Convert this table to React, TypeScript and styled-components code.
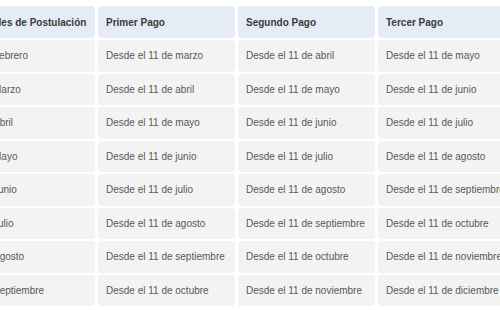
import styled, { createGlobalStyle } from "styled-components";

const GlobalStyle = createGlobalStyle`
  html, body {
    margin: 0;
    padding: 0;
    background: #ffffff;
    overflow: hidden;
  }
  body {
    width: 500px;
    height: 310px;
    font-family: "Liberation Sans", Arial, sans-serif;
  }
`;

const Frame = styled.div`
  width: 500px;
  height: 310px;
  overflow: hidden;
  padding-top: 4px;
  box-sizing: border-box;
`;

const Table = styled.table`
  margin-left: -18px;
  border-collapse: separate;
  border-spacing: 3px 2px;
  table-layout: fixed;
  width: 533px;
`;

const HeadCell = styled.th<{ $w: number }>`
  width: ${(p) => p.$w}px;
  height: 32px;
  padding: 0 8px;
  box-sizing: border-box;
  text-align: left;
  font-size: 10px;
  font-weight: bold;
  color: #3a3a3a;
  background-color: #e5ecf6;
  border-radius: 4px;
  white-space: nowrap;
  overflow: hidden;
`;

const Cell = styled.td`
  height: 31.5px;
  padding: 0 8px;
  box-sizing: border-box;
  font-size: 10px;
  color: #585858;
  background-color: #f3f3f3;
  border-radius: 4px;
  white-space: nowrap;
  overflow: hidden;
`;

const columns = [
  { title: "Mes de Postulación", w: 110 },
  { title: "Primer Pago", w: 137 },
  { title: "Segundo Pago", w: 137 },
  { title: "Tercer Pago", w: 137 },
];

const months = [
  "marzo",
  "abril",
  "mayo",
  "junio",
  "julio",
  "agosto",
  "septiembre",
  "octubre",
  "noviembre",
  "diciembre",
];

const postulacion = [
  "Febrero",
  "Marzo",
  "Abril",
  "Mayo",
  "Junio",
  "Julio",
  "Agosto",
  "Septiembre",
];

function App() {
  return (
    <>
      <GlobalStyle />
      <Frame>
        <Table>
          <thead>
            <tr>
              {columns.map((c) => (
                <HeadCell key={c.title} $w={c.w}>
                  {c.title}
                </HeadCell>
              ))}
            </tr>
          </thead>
          <tbody>
            {postulacion.map((m, i) => (
              <tr key={m}>
                <Cell>{m}</Cell>
                <Cell>Desde el 11 de {months[i]}</Cell>
                <Cell>Desde el 11 de {months[i + 1]}</Cell>
                <Cell>Desde el 11 de {months[i + 2]}</Cell>
              </tr>
            ))}
          </tbody>
        </Table>
      </Frame>
    </>
  );
}

export default App;
